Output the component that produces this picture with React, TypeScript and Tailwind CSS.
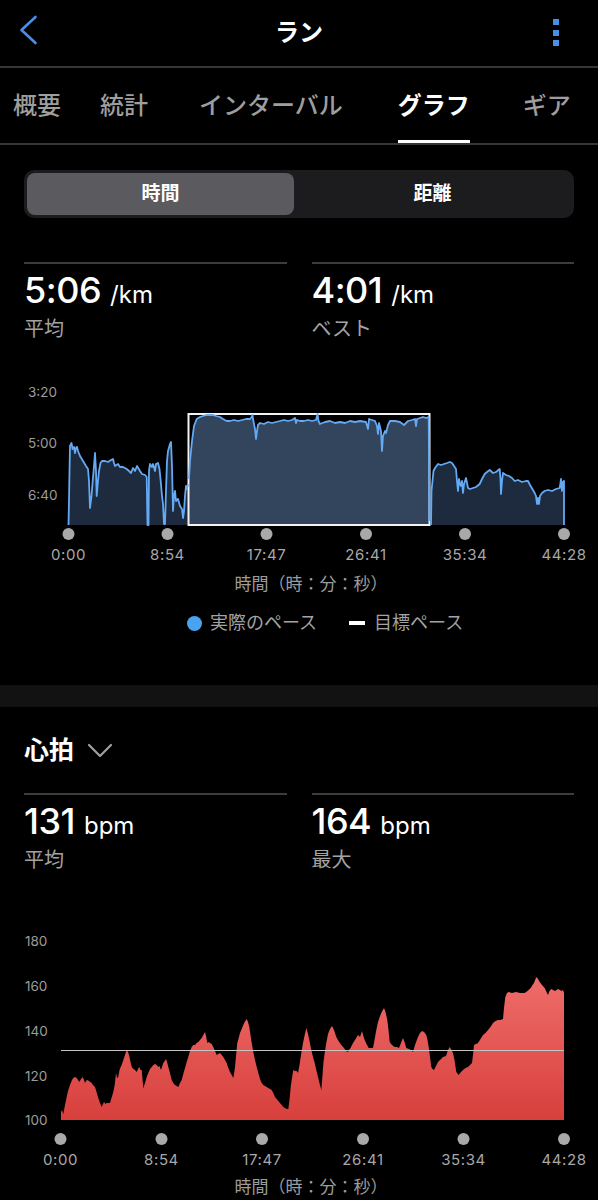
import React from "react";

type P = [number, number];

const paceA: P[] = [[68.5,524],[69,500],[69.5,470],[70,445],[71.5,442],[72.5,448],[74,446],[75,452],[76,447],[77,446],[78,450],[80,455],[83,460],[86,465],[88,468],[89,480],[90,507],[91.5,495],[92.7,480],[94,465],[95,452],[96,470],[96.7,495],[98,480],[99,470],[100.5,462],[102,460],[105,460],[108,461],[111,459],[113,458],[114,462],[115,465],[118,463],[120,466],[123,466],[126.7,468],[129,470],[131,472],[133,467],[135,470],[137,465],[140,470],[142,473],[145,474],[146.7,476],[147.5,524],[148.5,524],[149,470],[150,463],[152,466],[153,463],[155,470],[156,463],[158,462],[159.5,468],[160.7,480],[162,495],[163,503],[164,523],[165,523],[166,490],[167,460],[168,450],[170,443],[171,441],[172,465],[173,510],[174,495],[175,490],[176,500],[178,498],[180,505],[182,508],[183,517],[184,510],[185,495],[186,485],[187,488],[188,483]];

const paceB: P[] = [[189,478],[190,460],[192,440],[194,425],[196.7,418],[200,416],[203,415],[206.7,414],[210,414],[213,414],[216,415],[220,416],[223,418],[226.7,420],[230,420],[234,419],[238,420],[242,419],[246,418],[250,418],[251.7,416],[252.5,414],[253,418],[255,428],[256,438],[257,430],[258,424],[260,422],[264,423],[268,421],[272,422],[276,421],[280,420],[284,419],[288,420],[292,419],[295,417],[296,422],[297,419],[300,420],[304,420],[308,419],[312,420],[316,419],[317.5,413],[318.5,420],[320,423],[325,421],[330,420],[335,422],[340,421],[345,422],[350,420],[355,421],[360,420],[366,421],[368,428],[369,418],[372,419],[375,420],[377,425],[378,433],[379,422],[381,430],[382,450],[383,435],[385,430],[386,432],[388,424],[390,420],[395,420],[400,421],[404,424],[408,420],[412,419],[415,418],[416,425],[417,418],[420,417],[423,416],[426,417],[428.7,416],[429.5,520]];

const paceC: P[] = [[431,524],[431.5,490],[432.5,480],[433.5,470],[435,467],[438,463],[441,464],[444,463],[447,462],[449.7,461],[452,462],[454,465],[456,468],[457,480],[458,490],[459,478],[460,483],[461,485],[462,480],[463,492],[464,483],[466,477],[468,487],[470,488],[473,487],[476,486],[479.7,483],[482,478],[484.7,473],[487,471],[489.7,469],[493,472],[496,471],[499.7,468],[500.5,478],[501,493],[502,480],[503,472],[506,474],[509,475],[512,477],[514.7,480],[518,479],[522,481],[526,480],[528,480],[530,484],[533,489],[534.7,492],[536,495],[537,503],[538,497],[539,503],[540,495],[542,492],[544.7,490],[548,489],[552,490],[556,488],[559.7,487],[560.5,482],[561,478],[562,490],[563,481],[564,480],[564,524]];

const hr: P[] = [[61,1120],[61,1112],[62,1110],[63.3,1114],[65,1105],[66.7,1097],[68,1091],[70,1085],[72,1080],[73.3,1078],[75,1077],[76.7,1078],[78,1080],[79.3,1082],[81,1079],[82.7,1077],[84,1080],[85,1083],[86,1081],[87.3,1080],[89,1081],[91.7,1083],[93,1085],[95,1087],[96.5,1092],[98.3,1098],[100,1103],[101.7,1107],[103,1104],[104,1102],[105.5,1104],[106.7,1103],[108,1103],[110,1103],[111.5,1098],[113.3,1092],[114.7,1085],[116,1073],[117,1078],[118.3,1077],[119.5,1070],[120.7,1067],[122,1064],[123.3,1060],[125,1055],[126.7,1050],[128,1052],[129.3,1056],[130.5,1062],[131.7,1067],[133.5,1069],[135,1070],[136.7,1072],[138,1069],[139.3,1067],[140.5,1070],[141.7,1070],[143.3,1088],[145,1083],[146.7,1077],[148.3,1073],[150,1069],[151.7,1067],[153.3,1065],[155,1064],[156.7,1065],[158.3,1067],[159.5,1066],[161,1070],[162,1067],[163.3,1063],[164.7,1061],[166,1059],[167.3,1063],[168.3,1067],[170,1073],[171.7,1080],[173.3,1083],[175,1085],[176.7,1086],[178.3,1087],[180,1083],[181.7,1080],[183.3,1074],[185,1068],[186.7,1062],[188.3,1057],[190,1051],[191.7,1047],[193.3,1045],[195,1045],[196.7,1043],[198.3,1042],[200,1040],[201.7,1038],[203.3,1035],[205,1032],[206,1036],[207.3,1043],[208.5,1042],[210,1043],[211.7,1044],[213.3,1047],[215,1051],[216.7,1055],[218.3,1054],[220,1053],[221.7,1055],[223.3,1057],[225,1060],[226.7,1063],[228.3,1068],[230,1072],[231.7,1075],[233.3,1078],[234.3,1072],[235,1067],[236,1056],[237.3,1043],[238.7,1038],[240,1033],[241.7,1029],[243.3,1025],[244.7,1022],[246.7,1019],[248,1022],[249.3,1027],[250.5,1035],[251.7,1043],[253.3,1052],[255,1060],[256.7,1067],[258.3,1073],[260,1079],[261.7,1083],[263.3,1085],[265,1086],[266.7,1087],[268.3,1088],[270,1089],[271.7,1090],[273.3,1093],[275,1097],[276.7,1099],[278.3,1101],[280,1103],[281.7,1105],[283.3,1107],[285,1108],[286.7,1109],[288.3,1109],[289.5,1100],[290.7,1087],[292,1078],[293.3,1070],[295,1071],[296.7,1071],[298,1073],[299.5,1065],[301.3,1053],[303,1043],[304.7,1035],[306.3,1028],[308,1034],[309.7,1042],[311.3,1050],[313,1057],[314.7,1063],[316.3,1070],[318,1077],[319.7,1084],[321.3,1090],[322.5,1075],[323.5,1062],[324.7,1053],[326.3,1043],[328,1034],[330,1029],[332,1026],[334,1030],[336.3,1037],[338.5,1041],[341.3,1045],[344,1048],[346,1051],[348,1052],[349,1050],[350.5,1048],[353,1043],[355,1040],[358,1035],[360,1037],[362,1031],[363.3,1036],[364.7,1040],[366.5,1044],[368.7,1048],[371,1048],[373,1048],[374.5,1040],[376.3,1030],[378,1022],[379.7,1017],[381.7,1012],[384,1008],[385.5,1012],[387.3,1020],[388.5,1030],[389.7,1042],[392,1045],[394.7,1047],[397,1047],[399,1048],[401,1043],[403,1038],[404.5,1042],[406.3,1048],[409,1049],[411,1050],[413,1052],[415,1045],[418,1037],[420,1033],[422,1031],[424,1032],[426.3,1035],[427.5,1040],[428.7,1047],[430,1057],[431.3,1067],[432.5,1069],[434,1070],[436,1066],[438,1062],[440,1060],[443,1057],[446,1056],[448,1050],[449.7,1047],[451.5,1050],[453,1053],[454.5,1060],[456.3,1072],[458.7,1075],[461,1072],[463,1070],[465.5,1068],[468,1067],[470,1065],[472,1063],[473,1055],[474,1045],[476,1044],[478,1043],[480.5,1039],[483,1035],[485.5,1033],[488,1030],[490.5,1027],[493,1023],[495.5,1021],[498,1020],[500.5,1020],[503,1019],[504,1008],[505.3,997],[507,993],[508.7,992],[512,993],[516,992],[520,993],[524.7,993],[527.5,991],[530.7,988],[532.5,985],[534,983],[535.5,979],[536.7,977],[538,979],[539.7,982],[542,985],[544.7,988],[546.5,992],[548,995],[549.5,991],[551.3,989],[553,990],[555,991],[556.5,990],[558,989],[560,990],[561.3,991],[563,990],[564,993],[564,1120]];

const pts = (a: P[]) => a.map((p) => `${p[0]},${p[1]}`).join(" ");
const area = (a: P[], base: number) =>
  `M${a[0][0]},${base} L` + a.map((p) => `${p[0]},${p[1]}`).join(" L") + ` L${a[a.length - 1][0]},${base} Z`;

const ticks = ["0:00", "8:54", "17:47", "26:41", "35:34", "44:28"];

function Stat({ value, unit, label }: { value: string; unit: string; label: string }) {
  return (
    <div className="flex-1">
      <div className="h-[2px] bg-[#3c3c3c]" />
      <div className="mt-[5px] text-[36px] leading-[42px] whitespace-nowrap">
        <span className="font-medium tracking-[-0.5px]">{value}</span>
        <span className="text-[24px] leading-none ml-[9px]">{unit}</span>
      </div>
      <div className="mt-[4px] text-[20px] leading-[28px] text-[#a3a3a3]">{label}</div>
    </div>
  );
}

function PaceChart() {
  const tx = [68.5, 167.5, 266.5, 366, 465, 564];
  return (
    <svg width="598" height="190" viewBox="0 375 598 190" className="block">
      <text x="28" y="391" fontSize="13.5" fill="#9c9c9c" dominantBaseline="central" fontFamily="Inter">3:20</text>
      <text x="28" y="442" fontSize="13.5" fill="#9c9c9c" dominantBaseline="central" fontFamily="Inter">5:00</text>
      <text x="28" y="494" fontSize="13.5" fill="#9c9c9c" dominantBaseline="central" fontFamily="Inter">6:40</text>
      <path d={area(paceA, 524)} fill="#1e2b3f" />
      <path d={area(paceB, 524)} fill="#33455d" />
      <path d={area(paceC, 524)} fill="#1e2b3f" />
      <rect x="188.5" y="413" width="241" height="111" fill="none" stroke="#f2f2f2" strokeWidth="2" />
      <polyline points={pts(paceA)} fill="none" stroke="#64a9f4" strokeWidth="1.8" strokeLinejoin="round" />
      <polyline points={pts(paceB)} fill="none" stroke="#64a9f4" strokeWidth="1.8" strokeLinejoin="round" />
      <polyline points={pts(paceC)} fill="none" stroke="#64a9f4" strokeWidth="1.8" strokeLinejoin="round" />
      {tx.map((x, i) => (
        <g key={i}>
          <circle cx={x} cy="533" r="6" fill="#a9a9a9" />
          <text x={x} y="553" fontSize="15" fill="#a8a8a8" textAnchor="middle" dominantBaseline="central" fontFamily="Inter" letterSpacing="0.6">{ticks[i]}</text>
        </g>
      ))}
    </svg>
  );
}

function HrChart() {
  const tx = [60.5, 161.5, 262, 363, 463.5, 564];
  const ys: [string, number][] = [["180", 940.5], ["160", 985.5], ["140", 1030.5], ["120", 1075.5], ["100", 1120]];
  return (
    <svg width="598" height="245" viewBox="0 925 598 245" className="block">
      <defs>
        <linearGradient id="hrg" x1="0" y1="977" x2="0" y2="1120" gradientUnits="userSpaceOnUse">
          <stop offset="0" stopColor="#ef6d6a" />
          <stop offset="1" stopColor="#d73f3c" />
        </linearGradient>
      </defs>
      {ys.map(([t, y]) => (
        <text key={t} x="25" y={y} fontSize="13.5" fill="#9c9c9c" dominantBaseline="central" fontFamily="Inter">{t}</text>
      ))}
      <path d={area(hr, 1120)} fill="url(#hrg)" />
      <line x1="61" y1="1050.5" x2="564" y2="1050.5" stroke="#c4c4c4" strokeWidth="1" />
      {tx.map((x, i) => (
        <g key={i}>
          <circle cx={x} cy="1139" r="6" fill="#a9a9a9" />
          <text x={x} y="1159" fontSize="15" fill="#a8a8a8" textAnchor="middle" dominantBaseline="central" fontFamily="Inter" letterSpacing="0.6">{ticks[i]}</text>
        </g>
      ))}
    </svg>
  );
}

export default function App() {
  return (
    <div className="w-[598px] h-[1200px] overflow-hidden bg-black text-white font-[Inter,'Noto_Sans_CJK_JP',sans-serif]">
      {/* Header */}
      <div className="relative h-[66px] flex items-center justify-center">
        <svg className="absolute left-[18px] top-[14px]" width="22" height="32" viewBox="0 0 22 32">
          <polyline points="17.5,3 3.5,16 17.5,29" fill="none" stroke="#4a8fe7" strokeWidth="2.6" strokeLinecap="round" strokeLinejoin="round" />
        </svg>
        <span className="text-[24px] font-bold leading-none">ラン</span>
        <div className="absolute left-[553px] top-[19px] flex flex-col gap-[4.5px]">
          <div className="w-[6px] h-[6px] bg-[#4a90e2]" />
          <div className="w-[6px] h-[6px] bg-[#4a90e2]" />
          <div className="w-[6px] h-[6px] bg-[#4a90e2]" />
        </div>
      </div>
      <div className="h-[2px] bg-[#363636]" />

      {/* Tabs */}
      <div className="flex h-[75px] pl-[13px] text-[24px] text-[#9e9e9e] font-medium whitespace-nowrap">
        <div className="flex items-center">概要</div>
        <div className="ml-[39px] flex items-center">統計</div>
        <div className="ml-[51px] flex items-center">インターバル</div>
        <div className="ml-[55px] relative flex items-center text-white font-bold">
          グラフ
          <div className="absolute bottom-0 left-0 right-0 h-[3px] bg-white" />
        </div>
        <div className="ml-[53px] flex items-center">ギア</div>
      </div>
      <div className="h-[2px] bg-[#363636]" />

      {/* Segmented control */}
      <div className="mt-[25px] mx-[24px] h-[48px] rounded-[10px] bg-[#1c1c1e] p-[3px] grid grid-cols-[267px_1fr]">
        <div className="rounded-[8px] bg-[#5b5b5f] flex items-center justify-center text-[19px] font-semibold">時間</div>
        <div className="flex items-center justify-center text-[19px] font-semibold">距離</div>
      </div>

      {/* Pace stats */}
      <div className="mt-[44px] px-[24px] flex gap-[25px]">
        <Stat value="5:06" unit="/km" label="平均" />
        <Stat value="4:01" unit="/km" label="ベスト" />
      </div>

      <div className="mt-[33px]">
        <PaceChart />
      </div>
      <div className="mt-[6px] text-center text-[17px] leading-[24px] text-[#9c9c9c] pl-[24px]">時間（時：分：秒）</div>
      <div className="mt-[15px] flex items-center text-[18px] leading-[24px] text-[#a3a3a3] pl-[187px]">
        <div className="w-[15px] h-[15px] rounded-full bg-[#4aa3ee]" />
        <span className="ml-[8px]">実際のペース</span>
        <div className="ml-[32px] w-[16px] h-[4px] bg-white" />
        <span className="ml-[9px]">目標ペース</span>
      </div>

      <div className="mt-[50px] h-[22px] bg-[#121212]" />

      {/* Heart rate */}
      <div className="mt-[27px] px-[24px] flex items-center h-[34px]">
        <span className="text-[25px] font-bold">心拍</span>
        <svg className="ml-[13px]" width="26" height="16" viewBox="0 0 26 16">
          <polyline points="2,2 13,13 24,2" fill="none" stroke="#a0a0a0" strokeWidth="2.2" strokeLinecap="round" strokeLinejoin="round" />
        </svg>
      </div>
      <div className="mt-[25px] px-[24px] flex gap-[25px]">
        <Stat value="131" unit="bpm" label="平均" />
        <Stat value="164" unit="bpm" label="最大" />
      </div>

      <div className="mt-[51px]">
        <HrChart />
      </div>
      <div className="mt-[5px] text-center text-[17px] leading-[24px] text-[#9c9c9c] pl-[24px]">時間（時：分：秒）</div>
    </div>
  );
}
